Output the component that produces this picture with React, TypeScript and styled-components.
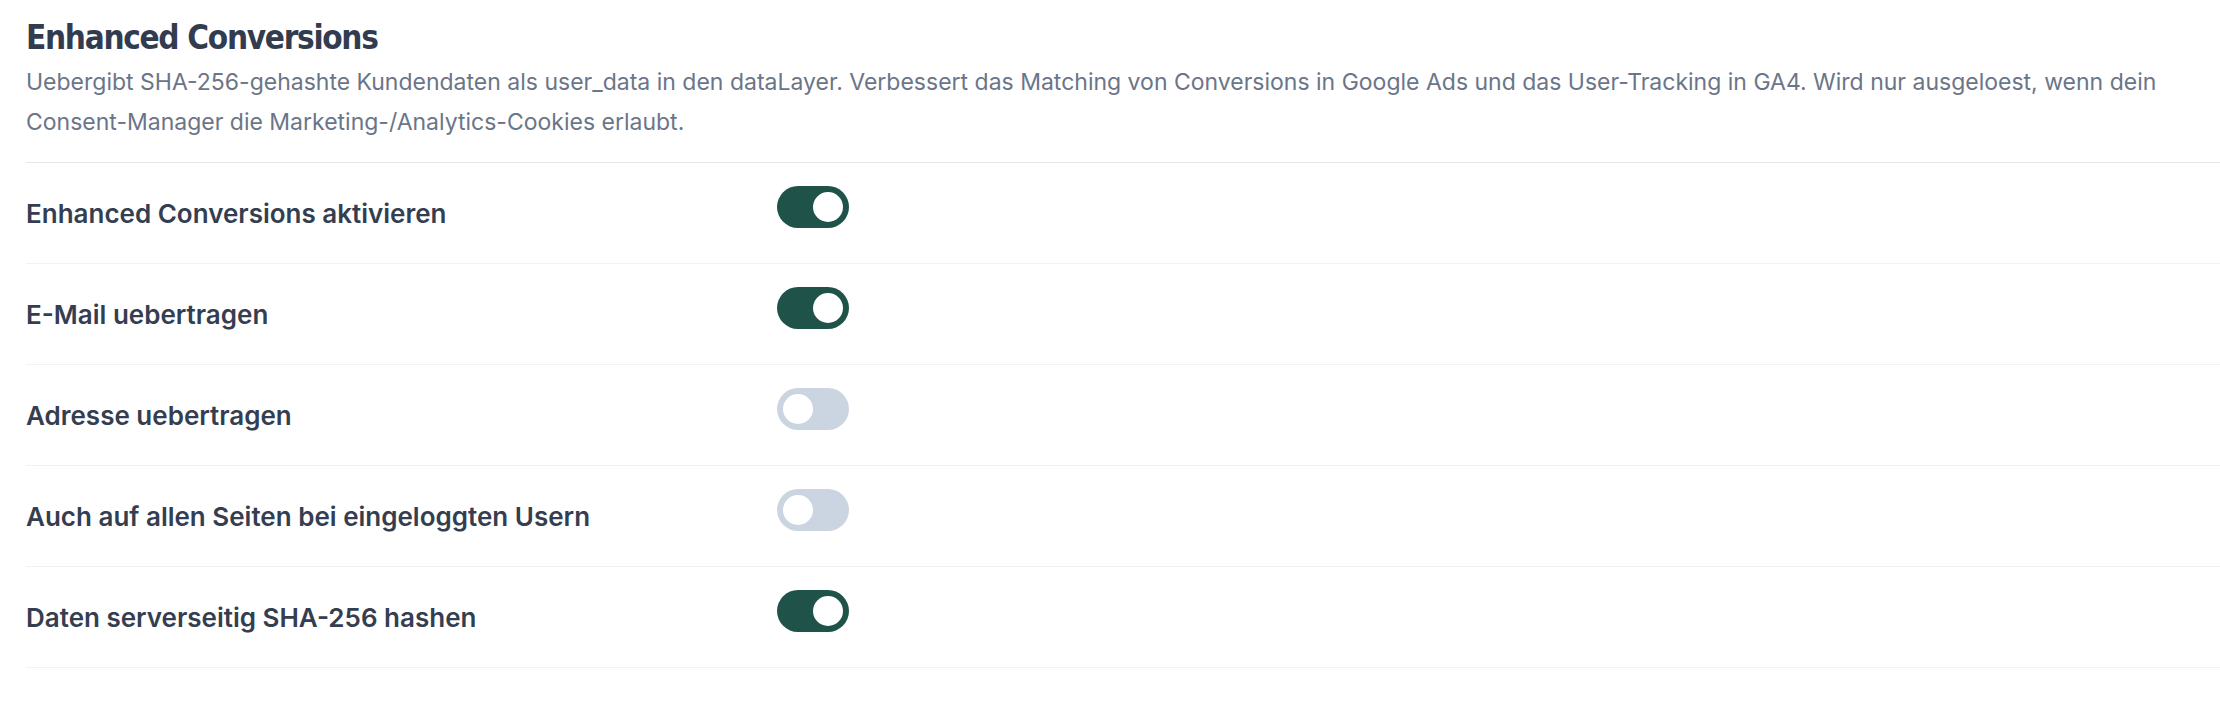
import React from "react";
import styled, { createGlobalStyle } from "styled-components";

const GlobalStyle = createGlobalStyle`
    html, body {
        margin: 0;
        padding: 0;
        background: #ffffff;
    }
    body {
        font-family: Inter, "Noto Sans", sans-serif;
    }
`;

const Section = styled.section`
    padding: 14px 0 0 26px;
    width: 2194px;
`;

const Title = styled.h2`
    margin: 0;
    font-family: "DejaVu Sans Condensed", "Liberation Sans Narrow", Roboto, sans-serif;
    font-stretch: condensed;
    font-size: 33px;
    font-weight: 700;
    letter-spacing: -1.3px;
    line-height: 48px;
    color: #323c4e;
`;

const Description = styled.p`
    margin: 0;
    padding: 0 40px 20px 0;
    font-size: 23px;
    line-height: 40px;
    color: #6b7588;
    border-bottom: 1px solid #e5e7eb;
`;

const Row = styled.div`
    display: grid;
    grid-template-columns: 751px 72px;
    align-items: center;
    height: 100px;
    border-bottom: 1px solid #f1f2f4;
`;

const Label = styled.span`
    font-size: 26px;
    font-weight: 600;
    color: #343e50;
`;

const Track = styled.button<{ $on: boolean }>`
    position: relative;
    width: 72px;
    height: 42px;
    margin-bottom: 12px;
    padding: 0;
    border: none;
    border-radius: 21px;
    background: ${p => (p.$on ? "#1f5249" : "#cbd5e1")};
    cursor: pointer;
`;

const Knob = styled.span<{ $on: boolean }>`
    position: absolute;
    top: 6px;
    left: ${p => (p.$on ? "36px" : "6px")};
    width: 30px;
    height: 30px;
    border-radius: 50%;
    background: #ffffff;
`;

const Toggle = ({ on }: { on: boolean }) => (
    <Track $on={on} aria-pressed={on}>
        <Knob $on={on} />
    </Track>
);

const settings = [
    { label: "Enhanced Conversions aktivieren", on: true },
    { label: "E-Mail uebertragen", on: true },
    { label: "Adresse uebertragen", on: false },
    { label: "Auch auf allen Seiten bei eingeloggten Usern", on: false },
    { label: "Daten serverseitig SHA-256 hashen", on: true },
];

export default function App() {
    return (
        <>
            <GlobalStyle />
            <Section>
                <Title>Enhanced Conversions</Title>
                <Description>
                    Uebergibt SHA-256-gehashte Kundendaten als user_data in den dataLayer. Verbessert das Matching von
                    Conversions in Google Ads und das User-Tracking in GA4. Wird nur ausgeloest, wenn dein
                    Consent-Manager die Marketing-/Analytics-Cookies erlaubt.
                </Description>
                {settings.map(s => (
                    <Row key={s.label}>
                        <Label>{s.label}</Label>
                        <Toggle on={s.on} />
                    </Row>
                ))}
            </Section>
        </>
    );
}
